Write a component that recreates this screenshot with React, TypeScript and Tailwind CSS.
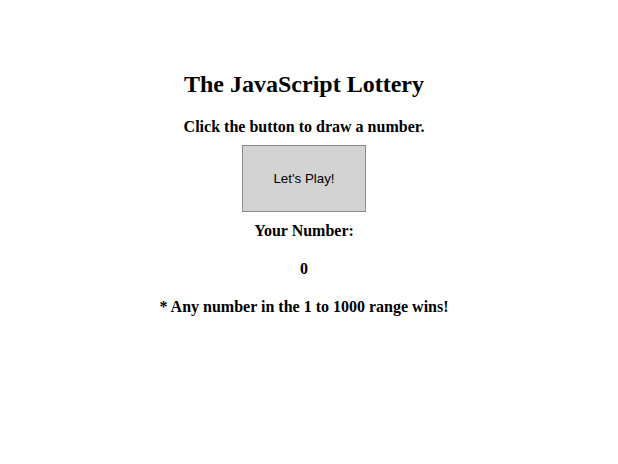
import { useState } from "react";

const serif = { fontFamily: '"Liberation Serif", "Times New Roman", serif' };

export default function App() {
  const [num, setNum] = useState(0);

  return (
    <div className="min-h-[464px] w-[618px] bg-white text-black">
      <div className="flex w-[608px] flex-col items-center pt-[70px]" style={serif}>
        <h2 className="text-[24px] leading-[28px] font-bold">The JavaScript Lottery</h2>
        <h4 className="mt-[19px] text-[16px] leading-[20px] font-bold">
          Click the button to draw a number.
        </h4>
        <button
          onClick={() => setNum(Math.floor(Math.random() * 1000) + 1)}
          className="mt-[8px] flex h-[67px] w-[124px] items-center justify-center border border-[#8a8a8a] bg-[#d3d3d3] pt-[1px] text-[13.33px] text-black"
          style={{ fontFamily: '"Liberation Sans", Arial, sans-serif' }}
        >
          Let's Play!
        </button>
        <h4 className="mt-[9px] text-[16px] leading-[20px] font-bold">Your Number:</h4>
        <h4 className="mt-[18px] text-[16px] leading-[20px] font-bold">{num}</h4>
        <h4 className="mt-[18px] text-[16px] leading-[20px] font-bold">
          * Any number in the 1 to 1000 range wins!
        </h4>
      </div>
    </div>
  );
}
